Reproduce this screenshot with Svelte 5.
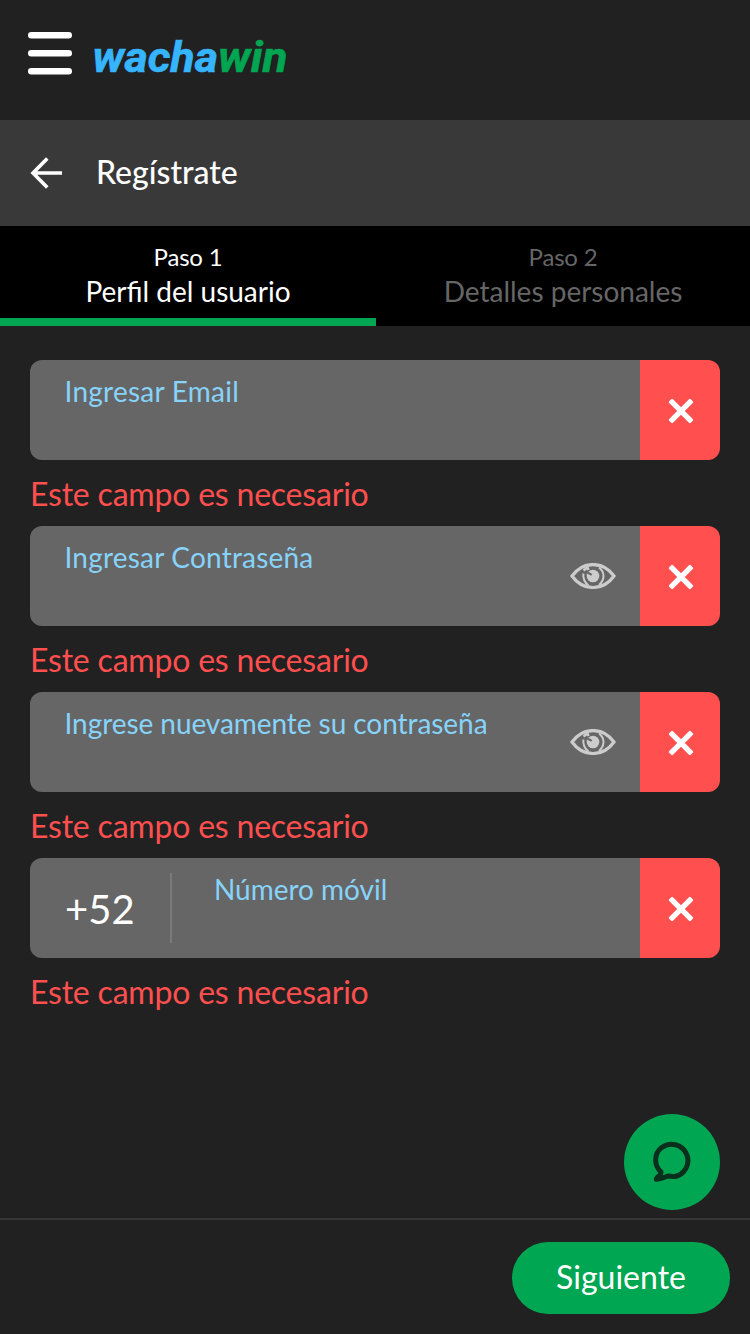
<script>
  const fields = [
    { label: 'Ingresar Email', tracking: 0.25 },
    { label: 'Ingresar Contraseña', tracking: 0.2, secret: true },
    { label: 'Ingrese nuevamente su contraseña', tracking: -0.06, secret: true },
    { label: 'Número móvil', tracking: -0.02, prefix: '+52' }
  ];
</script>

<div class="page">
  <header>
    <svg class="menu" width="44" height="43" viewBox="0 0 44 43" aria-hidden="true">
      <rect y="0" width="44" height="6.500" rx="3.2" />
      <rect y="18" width="44" height="6.500" rx="3.2" />
      <rect y="36" width="44" height="6.500" rx="3.2" />
    </svg>
    <svg class="logo" width="200" height="50" viewBox="0 0 200 50">
      <text y="39.500" x="0.500" textLength="125.500" lengthAdjust="spacingAndGlyphs" fill="#36b5fe" stroke="#36b5fe">wacha</text>
      <text y="39.500" x="126" textLength="69.500" lengthAdjust="spacingAndGlyphs" fill="#00a651" stroke="#00a651">win</text>
    </svg>
  </header>

  <div class="titlebar">
    <svg width="34" height="34" viewBox="0 0 34 34" fill="none" stroke="#fff" stroke-width="3.6" aria-hidden="true">
      <path d="M33 17H4M18.300 2.400L4 17l14.300 14.600" />
    </svg>
    <h1>Regístrate</h1>
  </div>

  <nav>
    <div class="step active"><small>Paso 1</small><span>Perfil del usuario</span></div>
    <div class="step"><small>Paso 2</small><span>Detalles personales</span></div>
  </nav>

  <main>
    {#each fields as f}
      <div class="field">
        <div class="box">
          {#if f.prefix}<div class="prefix">{f.prefix}</div>{/if}
          <label class:narrow={f.prefix} style="letter-spacing: {f.tracking}px">{f.label}</label>
          {#if f.secret}
            <svg class="eye" width="46" height="26" viewBox="0 0 46 26" fill="none" stroke="#ccc" aria-hidden="true">
              <path d="M2 13C13-2.300 33-2.300 44 13C33 28.300 13 28.300 2 13Z" stroke-width="3.200" />
              <path d="M13.300 10.500C13 15 14.500 19.500 18.500 22.500M29 4.500C35 9 35 17 29 22" stroke-width="2" />
              <path d="M13.500 7.500l4-3 1 2.500" stroke-width="2.600" />
              <circle cx="23" cy="13" r="6.300" fill="#ccc" stroke="none" />
              <path d="M17.500 9.500l4.200 2.300" stroke="#666" stroke-width="2" />
            </svg>
          {/if}
        </div>
        <div class="bad">
          <svg width="26" height="26" viewBox="0 0 26 26" aria-hidden="true">
            <g fill="#fff" transform="rotate(45 13 13)">
              <rect x="-2.300" y="10.300" width="30.600" height="5.400" rx="1.300" />
              <rect x="10.300" y="-2.300" width="5.400" height="30.600" rx="1.300" />
            </g>
          </svg>
        </div>
      </div>
      <p>Este campo es necesario</p>
    {/each}
  </main>

  <div class="chatrow">
    <div class="chat">
      <svg width="40" height="42" viewBox="0 0 40 42" fill="none" stroke="#08301c" stroke-width="5" stroke-linejoin="round" aria-hidden="true">
        <path d="M9 31C1.500 24 2 12.500 9.700 6.600A16.300 16.300 0 1 1 23 35.500C21 36 18 35 16 35C12 36.500 8 38.200 4.200 38.200C3.700 37 9.200 34.500 9 31Z" />
      </svg>
    </div>
  </div>

  <footer><button>Siguiente</button></footer>
</div>

<style>
  :global(body) { margin: 0; background: #212121; }
  .page {
    width: 750px; height: 1334px; background: #212121; color: #fff;
    font-family: Lato, sans-serif; display: flex; flex-direction: column; overflow: hidden;
  }
  header { height: 120px; flex: none; display: flex; align-items: flex-start; padding-left: 28px; box-sizing: border-box; }
  .menu { fill: #fff; margin-top: 32px; }
  .logo { margin: 32px 0 0 20px; font: italic 700 42px Roboto, sans-serif; overflow: visible; stroke-width: 0.6; }
  .titlebar { height: 106px; flex: none; background: #393939; display: flex; align-items: center; padding-left: 29px; gap: 33px; box-sizing: border-box; }
  h1 { margin: 0; font-size: 32px; line-height: 40px; font-weight: 500; padding-bottom: 3px; }
  nav { height: 100px; flex: none; background: #000; display: flex; }
  .step { flex: 1; display: flex; flex-direction: column; align-items: center; box-sizing: border-box; padding-top: 15px; color: #666; }
  .active { color: #fff; flex: 0 0 376px; border-bottom: 8px solid #00a651; }
  small { font-size: 24px; line-height: 32px; letter-spacing: -0.2px; }
  .step span { font-size: 28px; line-height: 37px; }
  main { padding: 34px 30px 0; }
  .field { height: 100px; display: flex; border-radius: 12px; overflow: hidden; }
  .box { flex: 1; background: #666; display: flex; align-items: center; }
  label { flex: 1; align-self: flex-start; padding: 13px 0 0 34.500px; font-size: 28px; line-height: 37px; color: #87d3fa; white-space: nowrap; }
  label.narrow { padding-left: 42px; }
  .eye { margin-right: 24px; }
  .prefix { width: 105px; height: 70px; line-height: 72px; border-right: 2px solid #7b7b7b; padding-left: 35px; font-size: 40px; }
  .bad { width: 80px; background: #ff4f4f; display: flex; align-items: center; justify-content: center; }
  .bad svg { margin: 2px 0 0 2px; }
  p { margin: 0; height: 66px; line-height: 67px; font-size: 32px; letter-spacing: -0.2px; color: #ff4f4f; }
  .chatrow { margin-top: auto; display: flex; justify-content: flex-end; padding: 0 30px 8px; }
  .chat { width: 96px; height: 96px; border-radius: 50%; background: #00a651; display: flex; align-items: center; justify-content: center; }
  footer { height: 116px; flex: none; box-sizing: border-box; border-top: 2px solid #363636; display: flex; justify-content: flex-end; padding: 22px 20px 0; }
  button { width: 218px; height: 72px; border: 0; padding: 0 0 2px; border-radius: 36px; background: #00a651; color: #fff; font: 32px/72px Lato, sans-serif; display: flex; justify-content: center; align-items: center; }
</style>
